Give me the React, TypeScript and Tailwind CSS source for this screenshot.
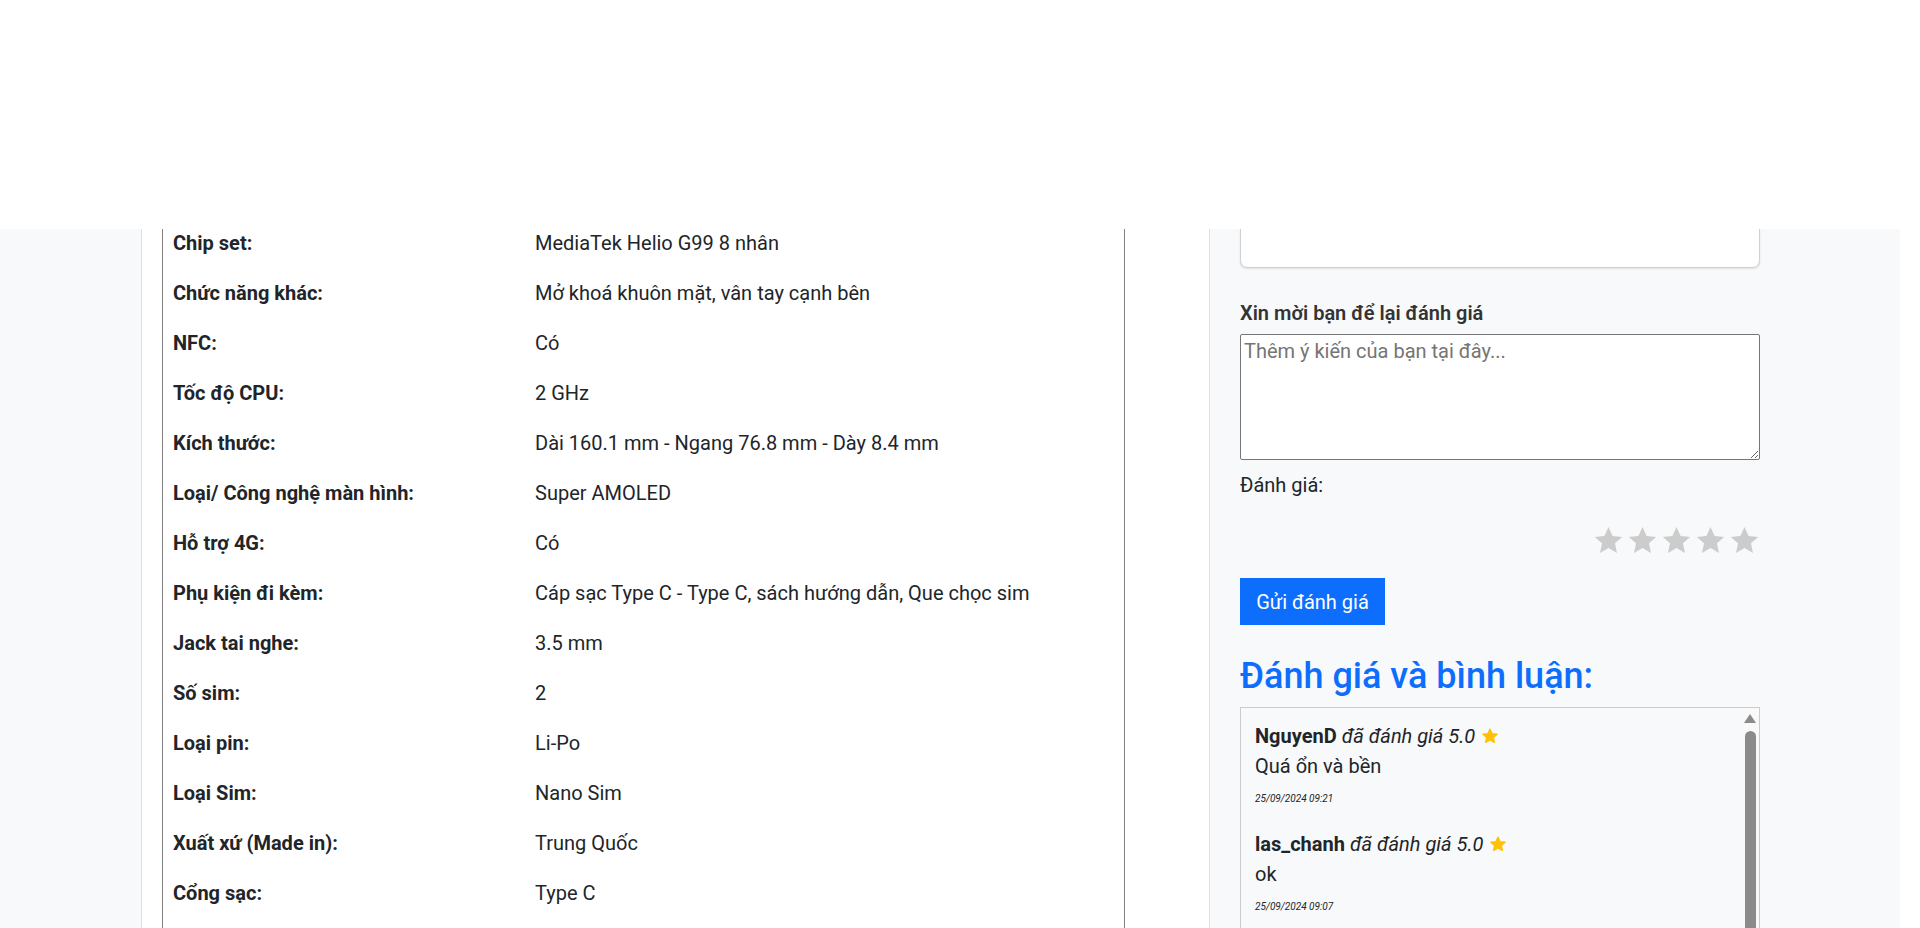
import React from "react";

const specs = [
  { label: "Chip set:", value: "MediaTek Helio G99 8 nhân" },
  { label: "Chức năng khác:", value: "Mở khoá khuôn mặt, vân tay cạnh bên" },
  { label: "NFC:", value: "Có" },
  { label: "Tốc độ CPU:", value: "2 GHz" },
  { label: "Kích thước:", value: "Dài 160.1 mm - Ngang 76.8 mm - Dày 8.4 mm" },
  { label: "Loại/ Công nghệ màn hình:", value: "Super AMOLED" },
  { label: "Hỗ trợ 4G:", value: "Có" },
  { label: "Phụ kiện đi kèm:", value: "Cáp sạc Type C - Type C, sách hướng dẫn, Que chọc sim" },
  { label: "Jack tai nghe:", value: "3.5 mm" },
  { label: "Số sim:", value: "2" },
  { label: "Loại pin:", value: "Li-Po" },
  { label: "Loại Sim:", value: "Nano Sim" },
  { label: "Xuất xứ (Made in):", value: "Trung Quốc" },
  { label: "Cổng sạc:", value: "Type C" },
];

const reviews = [
  { user: "NguyenD", score: "5.0", text: "Quá ổn và bền", date: "25/09/2024 09:21" },
  { user: "las_chanh", score: "5.0", text: "ok", date: "25/09/2024 09:07" },
];

const STAR = "12,1.6 15.2,8.5 22.6,9.2 17,14.2 18.6,21.6 12,17.8 5.4,21.6 7,14.2 1.4,9.2 8.8,8.5";

function Star({ className }: { className: string }) {
  return (
    <svg viewBox="0 0 24 24" className={className}>
      <polygon points={STAR} fill="currentColor" />
    </svg>
  );
}

function SmallStar() {
  return (
    <svg viewBox="0 0 24 24" className="inline-block w-[16px] h-[16px] ml-[7px] -mt-[3px] align-middle text-[#ffc107]">
      <polygon points={STAR} fill="currentColor" stroke="currentColor" strokeWidth="2" strokeLinejoin="round" />
    </svg>
  );
}

export default function App() {
  return (
    <div className="min-h-screen bg-white font-['Roboto',sans-serif] text-[20px] leading-[30px] text-[#212529]">
      {/* fixed header area (empty) */}
      <header className="h-[229px] bg-white" />

      <div className="flex h-[699px] overflow-hidden">
        <div className="w-[141px] shrink-0 bg-[#f8f9fa]" />

        {/* Spec table */}
        <section className="w-[1068px] shrink-0 bg-white border-l border-[#dee2e6] pl-[20px]">
          <div className="-mt-[11.5px] w-[963px] border-x border-[#808080] pb-[60px]">
            {specs.map((s) => (
              <div key={s.label} className="flex h-[50px] items-center">
                <div className="w-[372px] shrink-0 pl-[10px] font-bold">{s.label}</div>
                <div className="flex-1">{s.value}</div>
              </div>
            ))}
          </div>
        </section>

        {/* Review column */}
        <aside className="w-[691px] shrink-0 bg-[#f8f9fa] border-l border-[#dee2e6] pl-[30px]">
          <div className="w-[520px] flex flex-col">
            <div className="h-[39px] bg-white border border-t-0 border-[#d0d0d0] rounded-b-[7px] shadow-[0_1px_2px_rgba(0,0,0,0.1)]" />

            <label className="mt-[30px] font-semibold text-[#333333]">Xin mời bạn để lại đánh giá</label>
            <textarea
              placeholder="Thêm ý kiến của bạn tại đây..."
              className="mt-[6px] h-[126px] w-full bg-white border border-[#767676] rounded-[2px] px-[3px] py-[1px] text-[20px] leading-[30px] placeholder:text-[#757575] outline-none"
            />

            <div className="mt-[10px]">Đánh giá:</div>

            <div className="mt-[25px] flex justify-end gap-[3px]">
              {[0, 1, 2, 3, 4].map((i) => (
                <Star key={i} className="w-[31px] h-[31px] text-[#cccccc]" />
              ))}
            </div>

            <button className="mt-[22px] h-[47px] w-[145px] bg-[#0d6efd] text-white text-[20px]">Gửi đánh giá</button>

            <h2 className="mt-[30px] text-[36px] leading-[43px] font-medium text-[#0d6efd]">Đánh giá và bình luận:</h2>

            <div className="mt-[9px] flex h-[300px] border border-[#cccccc]">
              <div className="flex-1 pl-[14px] pt-[13px]">
                {reviews.map((r) => (
                  <div key={r.user} className="mb-[23px]">
                    <div>
                      <span className="font-bold">{r.user}</span> <span className="italic">đã đánh giá {r.score}</span>
                      <SmallStar />
                    </div>
                    <div>{r.text}</div>
                    <div className="mt-[10px] text-[10px] leading-[15px] italic">{r.date}</div>
                  </div>
                ))}
              </div>
              {/* scrollbar */}
              <div className="w-[18px] shrink-0 flex flex-col items-center pt-[6px] bg-[#f9f9f9]">
                <div className="w-0 h-0 border-l-[6.5px] border-r-[6.5px] border-b-[9px] border-l-transparent border-r-transparent border-b-[#8b8b8b]" />
                <div className="mt-[8px] w-[11px] flex-1 rounded-t-full bg-[#8b8b8b]" />
              </div>
            </div>
          </div>
        </aside>

        <div className="flex-1 bg-white" />
      </div>
    </div>
  );
}
